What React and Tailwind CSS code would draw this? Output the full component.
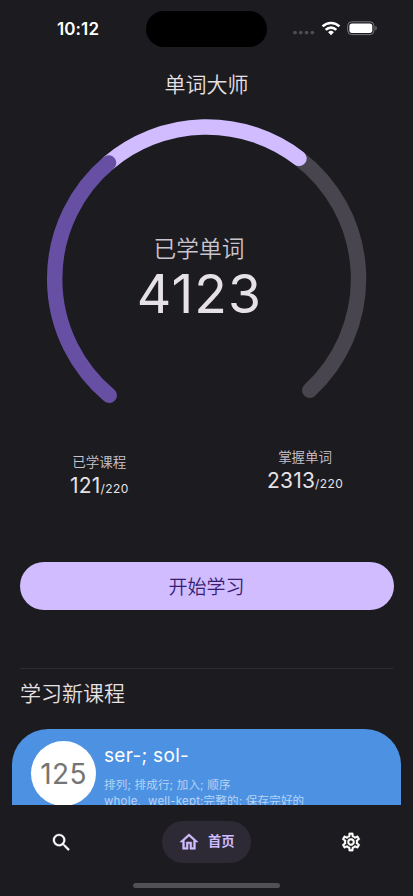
import { MdOutlineHome, MdOutlineSettings, MdSearch } from "react-icons/md";

// ═══════════════════════════════════════════════════════════════════
// STATUS BAR
// ═══════════════════════════════════════════════════════════════════
const StatusBar = () => (
  <div className="flex h-[58px] shrink-0 pt-[11px]">
    <div className="w-[146px] pl-[57px] pt-[7px] text-[17px] leading-[23px] font-semibold tracking-[0.1px] text-white">10:12</div>
    <div className="h-[36px] w-[121px] rounded-full bg-black" />
    <div className="flex h-[36px] items-center pl-[26px]">
      <svg width="22" height="12" viewBox="0 0 22 12" fill="#4d4c51">
        {[2, 7.8, 13.6, 19.4].map((x) => <circle key={x} cx={x} cy="9.6" r="1.9" />)}
      </svg>
      <svg className="mb-[2px] ml-[6px]" width="20" height="15" viewBox="0 0 20 15" fill="none" stroke="#fff" strokeWidth="2.6">
        <path d="M1.6 5.4a12 12 0 0 1 16.8 0" />
        <path d="M4.7 8.8a7.5 7.5 0 0 1 10.6 0" />
        <path d="M10 14.2L7.1 11.3a4.1 4.1 0 0 1 5.8 0z" fill="#fff" stroke="none" />
      </svg>
      <svg className="mb-[2px] ml-[6px]" width="32" height="16" viewBox="0 0 32 16" fill="none">
        <rect x="0.7" y="1.8" width="26.3" height="12.8" rx="4" stroke="#77767a" />
        <rect x="2.4" y="3.5" width="22.9" height="9.4" rx="2.6" fill="#fff" />
        <path d="M28.4 6c1.8.6 1.8 3.8 0 4.4z" fill="#77767a" />
      </svg>
    </div>
  </div>
);

// ═══════════════════════════════════════════════════════════════════
// PROGRESS RING
// ═══════════════════════════════════════════════════════════════════
const ProgressRing = () => (
  <div className="mx-auto mt-[9px] grid h-[300px] w-[329px] shrink-0 justify-items-center">
    <svg className="col-start-1 row-start-1" width="329" height="300" viewBox="42 110 329 300" fill="none" strokeWidth="15.4" strokeLinecap="round">
      <path d="M299 158.3A151.7 151.7 0 0 1 309.7 390.3" stroke="#49454e" />
      <path d="M108.6 162.9A151.7 151.7 0 0 1 299 158.3" stroke="#d0bcff" />
      <path d="M109.2 395.4A151.7 151.7 0 0 1 108.6 162.9" stroke="#6750a4" />
    </svg>
    <div className="col-start-1 row-start-1 flex flex-col items-center pt-[122px]">
      <div className="mr-[15px] text-[22.7px] leading-[34px] font-[350] text-[#cac4cf]">已学单词</div>
      <div className="mr-[14px] text-[53.5px] leading-[56px] tracking-[1.1px] text-[#e6e1e5]">4123</div>
    </div>
  </div>
);

const Stat = ({ label, value, total, className }) => (
  <div className={className}>
    <div className="flex w-fit flex-col items-center">
      <div className="text-[13.5px] leading-[20px] font-[350] text-[#cac4cf]">{label}</div>
      <div className="flex items-baseline leading-[28px] text-[#e6e1e5]">
        <span className="text-[21px] tracking-[0.2px]">{value}</span>
        <span className="text-[12px] tracking-[0.4px]">/{total}</span>
      </div>
    </div>
  </div>
);

// ═══════════════════════════════════════════════════════════════════
// COURSE CARD
// ═══════════════════════════════════════════════════════════════════
const CourseCard = () => (
  <div className="mx-3 mt-[19px] flex h-[76px] shrink-0 overflow-hidden rounded-t-[36px] bg-[#4c91e2] pl-[19px] pt-[12px]">
    <div className="flex size-[65px] shrink-0 items-center justify-center rounded-full bg-white text-[28px] tracking-[0.4px] text-[#757575]">125</div>
    <div className="pl-[8px] pt-[2px] whitespace-nowrap">
      <div className="text-[19px] leading-[26px] tracking-[0.3px] text-white">ser-; sol-</div>
      <div className="mt-[8px] text-[11.5px] leading-[16px] tracking-[0.2px] text-[#b8d3f4]">
        <div>排列; 排成行; 加入; 顺序</div>
        <div>whole,&nbsp; well-kept:完整的; 保存完好的</div>
      </div>
    </div>
  </div>
);

const BottomNav = () => (
  <div className="h-[91px] shrink-0 bg-[#1c1b1f] pt-[16px]">
    <div className="flex h-[42px] items-center justify-between pl-[50px] pr-[51px] text-white">
      <MdSearch size={23} strokeWidth={0.3} stroke="none" className="[&_path:last-child]:stroke-current" />
      <div className="flex h-[42px] w-[89px] items-center rounded-full bg-[#2d2a36] pl-[16px] text-[#d0bcff]">
        <MdOutlineHome size={22} strokeWidth={0.5} stroke="none" className="[&_path:last-child]:stroke-current" />
        <span className="pl-[8px] text-[13.3px] font-bold">首页</span>
      </div>
      <MdOutlineSettings size={22} strokeWidth={0.3} stroke="none" className="[&_path:last-child]:stroke-current" />
    </div>
    <div className="mx-auto mt-[20px] h-[5px] w-[147px] rounded-full bg-[#515053]" />
  </div>
);

export default function App() {
  return (
    <div className="flex h-[896px] w-[413px] flex-col overflow-hidden bg-[#1c1b1f] font-['Inter','Noto_Sans_CJK_SC',sans-serif]">
      <StatusBar />
      <h1 className="mt-[11px] text-center text-[21px] leading-[32px] font-[350] text-[#e6e1e5]">单词大师</h1>
      <ProgressRing />
      <div className="flex h-[104px] shrink-0">
        <Stat className="ml-[70px] mt-[42px] w-[197px]" label="已学课程" value="121" total="220" />
        <Stat className="mt-[37px]" label="掌握单词" value="2313" total="220" />
      </div>
      <button className="mx-[19.5px] mt-[48px] h-[48px] shrink-0 rounded-full bg-[#d0bcff] pt-[4px] text-[19px] font-[350] text-[#381e72]">开始学习</button>
      <div className="mx-[20px] mt-[58px] h-px shrink-0 bg-[#2f2d33]" />
      <h2 className="ml-[20px] mt-[9px] text-[21px] leading-[32px] font-[350] text-[#e6e1e5]">学习新课程</h2>
      <CourseCard />
      <BottomNav />
    </div>
  );
}
